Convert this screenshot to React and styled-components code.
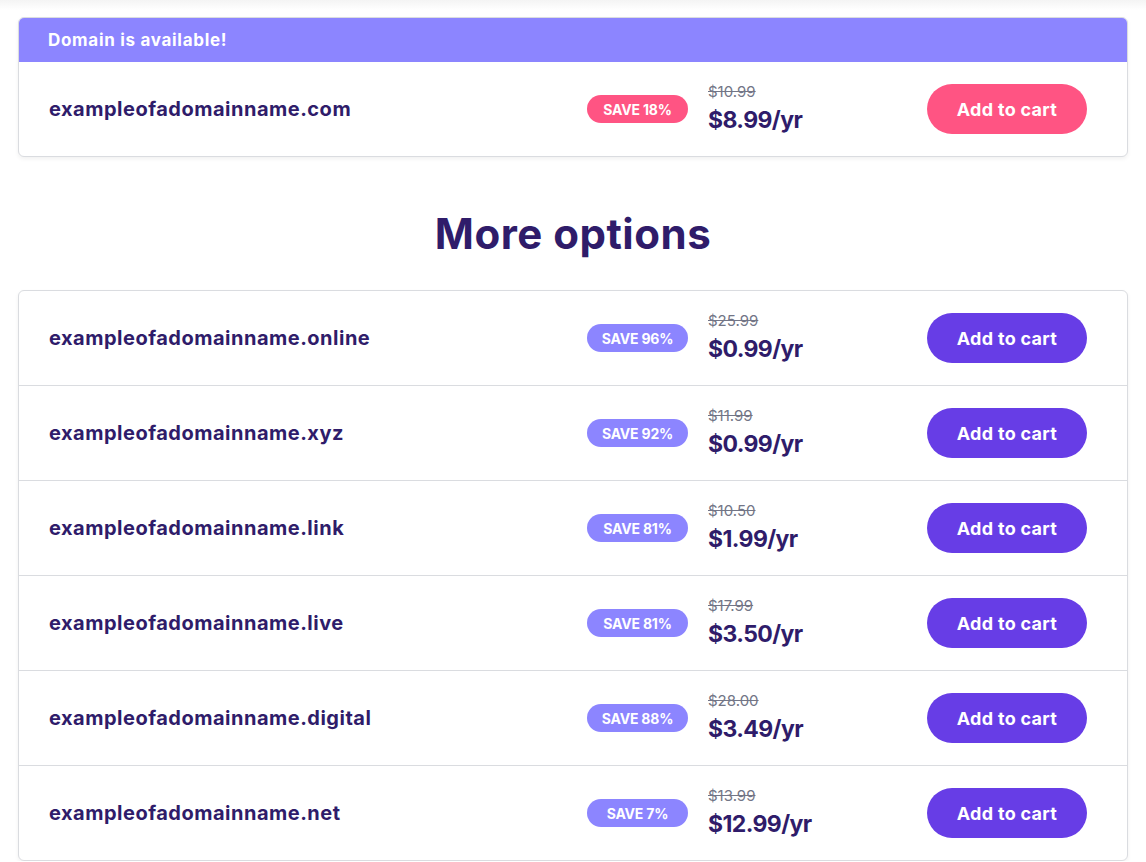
import React from "react";
import styled, { createGlobalStyle } from "styled-components";

const Global = createGlobalStyle`
  html, body { margin: 0; padding: 0; background: #fff; }
  body { font-family: Inter, "Noto Sans", sans-serif; color: #2f1c6a; }
  * { box-sizing: border-box; }
`;

const Page = styled.div`
  padding: 17px 18px 0;
  background: linear-gradient(#f4f4f4 0, #fff 10px);
`;

const Card = styled.div`
  border: 1px solid #dadce0;
  border-radius: 6px;
  background: #fff;
  overflow: hidden;
  box-shadow: 0 2px 4px rgba(0, 0, 0, 0.06);
`;

const CardHeader = styled.div`
  height: 45px;
  background: #8c85ff;
  color: #fff;
  font-weight: 700;
  font-size: 17px;
  letter-spacing: 0.7px;
  display: flex;
  align-items: center;
  padding: 0 30px;
  margin: -1px -1px 0;
`;

const Row = styled.div`
  height: 94px;
  display: flex;
  align-items: center;
  padding: 0 40px 0 30px;
  & + & { border-top: 1px solid #dadce0; height: 95px; }
`;

const Domain = styled.div`
  flex: 1;
  font-size: 20px;
  font-weight: 650;
  letter-spacing: 0.5px;
  color: #2f1c6a;
`;

const Badge = styled.span`
  width: 101px;
  height: 28px;
  border-radius: 14px;
  background: ${(p) => (p.$hot ? "#ff5483" : "#8c85ff")};
  color: #fff;
  font-size: 14px;
  font-weight: 700;
  letter-spacing: -0.2px;
  display: flex;
  align-items: center;
  justify-content: center;
  margin-right: 20px;
`;

const Price = styled.div`
  width: 219px;
  display: flex;
  flex-direction: column;
`;

const OldPrice = styled.span`
  font-size: 15px;
  color: #727586;
  text-decoration: line-through;
  line-height: 20px;
  margin-bottom: 2px;
`;

const NewPrice = styled.span`
  font-size: 23px;
  font-weight: 700;
  letter-spacing: -0.6px;
  color: #2f1c6a;
  line-height: 32px;
`;

const Button = styled.button`
  width: 160px;
  height: 50px;
  border: none;
  border-radius: 25px;
  background: ${(p) => (p.$hot ? "#ff5483" : "#673de6")};
  color: #fff;
  font-family: inherit;
  font-size: 18px;
  font-weight: 700;
  letter-spacing: 0.3px;
  cursor: pointer;
`;

const Heading = styled.h2`
  margin: 53px 0 32px;
  text-align: center;
  font-size: 42px;
  line-height: 48px;
  font-weight: 700;
  letter-spacing: 0.5px;
  color: #2f1c6a;
`;

const options = [
  ["exampleofadomainname.online", "96", "$25.99", "$0.99/yr"],
  ["exampleofadomainname.xyz", "92", "$11.99", "$0.99/yr"],
  ["exampleofadomainname.link", "81", "$10.50", "$1.99/yr"],
  ["exampleofadomainname.live", "81", "$17.99", "$3.50/yr"],
  ["exampleofadomainname.digital", "88", "$28.00", "$3.49/yr"],
  ["exampleofadomainname.net", "7", "$13.99", "$12.99/yr"],
];

function DomainRow({ name, save, old, price, hot }) {
  return (
    <Row>
      <Domain>{name}</Domain>
      <Badge $hot={hot}>SAVE {save}%</Badge>
      <Price>
        <OldPrice>{old}</OldPrice>
        <NewPrice>{price}</NewPrice>
      </Price>
      <Button $hot={hot}>Add to cart</Button>
    </Row>
  );
}

export default function App() {
  return (
    <Page>
      <Global />
      <Card>
        <CardHeader>Domain is available!</CardHeader>
        <DomainRow name="exampleofadomainname.com" save="18" old="$10.99" price="$8.99/yr" hot />
      </Card>
      <Heading>More options</Heading>
      <Card>
        {options.map(([n, s, o, p]) => (
          <DomainRow key={n} name={n} save={s} old={o} price={p} />
        ))}
      </Card>
    </Page>
  );
}
